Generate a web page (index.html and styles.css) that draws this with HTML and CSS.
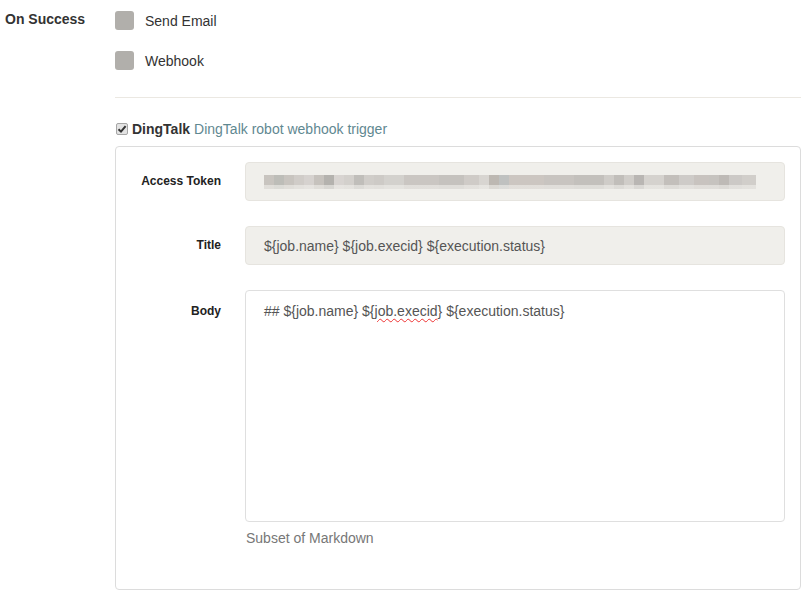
FILE: index.html
```html
<!DOCTYPE html>
<html>
<head>
<meta charset="utf-8">
<link rel="stylesheet" href="styles.css">
</head>
<body>
<div class="section">
  <div class="section-label">On Success</div>
  <div class="section-body">
    <div class="opt"><span class="box"></span><span class="opt-text">Send Email</span></div>
    <div class="opt"><span class="box"></span><span class="opt-text">Webhook</span></div>
    <hr class="sep">
    <div class="plugin-head">
      <span class="check"><svg width="10" height="10" viewBox="0 0 10 10"><path d="M1.5 5.2 L4 7.6 L8.6 2.2" fill="none" stroke="#333" stroke-width="2"/></svg></span>
      <span class="plugin-name">DingTalk</span>
      <span class="plugin-desc">DingTalk robot webhook trigger</span>
    </div>
    <div class="panel">
      <div class="row">
        <div class="lbl">Access Token</div>
        <div class="field"><div class="input ro"><div class="blur"></div></div></div>
      </div>
      <div class="row">
        <div class="lbl">Title</div>
        <div class="field"><div class="input ro">${job.name} ${job.execid} ${execution.status}</div></div>
      </div>
      <div class="row">
        <div class="lbl lbl-top">Body</div>
        <div class="field">
          <div class="textarea">## ${job.name} ${<span class="spell">job.execid</span>} ${execution.status}</div>
          <div class="help">Subset of Markdown</div>
        </div>
      </div>
    </div>
  </div>
</div>
</body>
</html>
```
FILE: styles.css
```css
* { box-sizing: border-box; }
body {
  margin: 0;
  font-family: "Liberation Sans", Arial, sans-serif;
  font-size: 14px;
  color: #333;
  background: #fff;
}
.section {
  display: flex;
  padding: 11px 8px 0 5px;
}
.section-label {
  width: 110px;
  font-weight: bold;
  font-size: 14px;
  line-height: 16px;
}
.section-body {
  flex: 1;
}
.opt {
  display: flex;
  align-items: center;
  height: 19px;
  margin-bottom: 21px;
}
.box {
  width: 19px;
  height: 19px;
  background: #b1afab;
  border-radius: 3px;
  margin-right: 11px;
}
.opt-text {
  font-size: 14px;
  color: #333;
}
.sep {
  border: 0;
  border-top: 1px solid #ebe8e2;
  margin: 27px 0 0 0;
}
.plugin-head {
  display: flex;
  align-items: center;
  margin-top: 24px;
  height: 14px;
  font-size: 14px;
}
.check {
  width: 12px;
  height: 12px;
  margin-left: 1px;
  margin-right: 4px;
  border: 1px solid #a6a6a6;
  border-radius: 2px;
  background: #e3e3e3;
  display: flex;
  align-items: center;
  justify-content: center;
}
.plugin-name {
  font-weight: bold;
  margin-right: 4px;
}
.plugin-desc {
  color: #5f8891;
}
.panel {
  margin-top: 10px;
  border: 1px solid #dcdcdc;
  border-radius: 4px;
  height: 444px;
  padding: 15px 15px 0 0;
}
.row {
  display: flex;
  margin-bottom: 25px;
}
.lbl {
  width: 105px;
  text-align: right;
  font-weight: bold;
  font-size: 12px;
  line-height: 39px;
  color: #222;
}
.lbl-top {
  line-height: 14px;
  padding-top: 14px;
}
.field {
  flex: 1;
  margin-left: 24px;
}
.input {
  height: 39px;
  border-radius: 4px;
  border: 1px solid #e6e4df;
  padding: 0 18px;
  display: flex;
  align-items: center;
  color: #555;
  font-size: 14px;
}
.ro {
  background: #f0efeb;
}
.blur {
  width: 492px;
  height: 14px;
  background:
    linear-gradient(to bottom, transparent 10px, rgba(240,239,235,0.6) 10px),
    linear-gradient(to right,
      #c8c4bf 0 10px, #bdbdb8 10px 20px, #c8c4bf 20px 30px, #d0ccc8 30px 40px, #d6d2cf 40px 50px,
      #c6c2bd 50px 60px, #b4b2ae 60px 70px, #d8d4d1 70px 80px, #d3d0cc 80px 90px, #c0beba 90px 100px,
      #d0cdc9 100px 110px, #cdcac6 110px 120px, #d3d1cd 120px 140px, #cac6c2 140px 175px,
      #c5c2be 175px 200px, #cfcbc7 200px 215px, #d8d5d1 215px 225px, #bdb8b2 225px 235px,
      #bfc1c0 235px 245px, #ccc6c1 245px 280px, #c8c4c0 280px 310px, #c3c0bc 310px 340px,
      #cfccc8 340px 350px, #c1beba 350px 360px, #d0cdc9 360px 370px, #b9b6b3 370px 380px,
      #d5d2ce 380px 400px, #c3bfbb 400px 415px, #cecbc8 415px 430px, #c8c3bf 430px 445px,
      #c6c3bf 445px 455px, #bebab6 455px 465px, #ccc9c6 465px 478px, #d1ceca 478px 492px);
}
.textarea {
  height: 232px;
  border: 1px solid #dfdfdf;
  border-radius: 4px;
  background: #fff;
  padding: 12px 18px;
  color: #555;
  font-size: 14px;
  line-height: 16px;
}
.spell {
  text-decoration: underline wavy #e33;
  text-decoration-thickness: 1px;
  text-underline-offset: 2px;
}
.help {
  margin-top: 8px;
  color: #777;
  font-size: 14px;
  line-height: 16px;
  padding-left: 1px;
}
```
